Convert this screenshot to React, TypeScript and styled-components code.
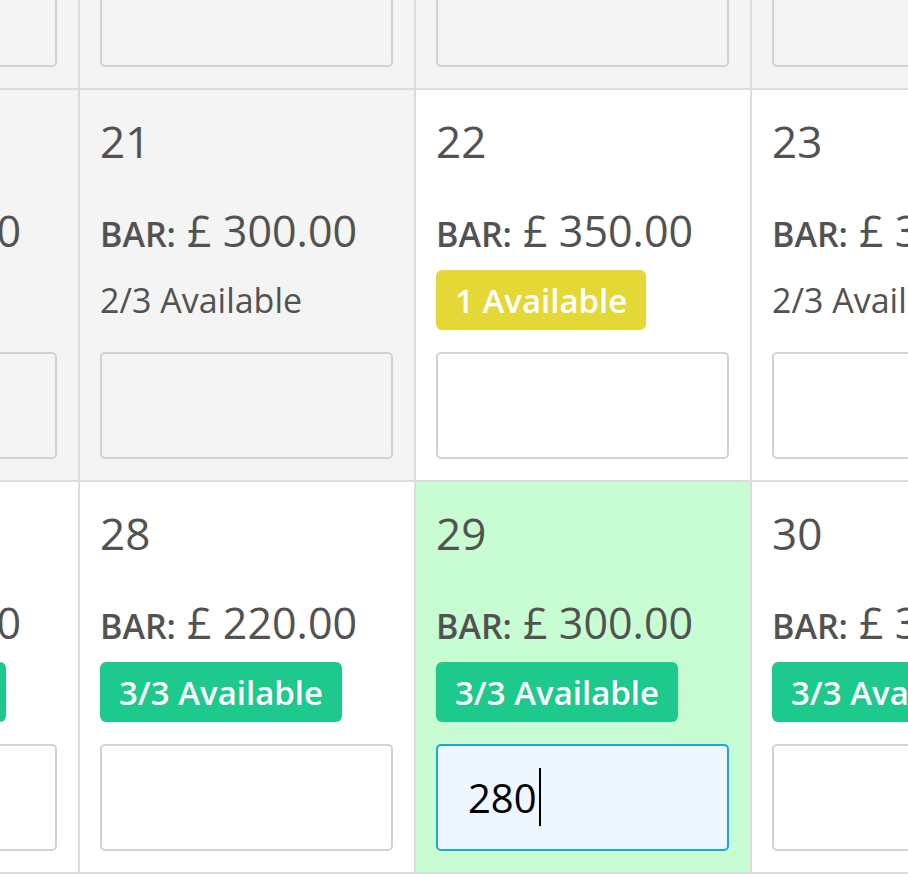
import React from "react";
import styled, { createGlobalStyle, css } from "styled-components";

const GlobalStyle = createGlobalStyle`
  html, body {
    margin: 0;
    padding: 0;
    background: #ffffff;
    overflow: hidden;
  }
  body {
    font-family: "Open Sans", "Noto Sans", "Liberation Sans", sans-serif;
    color: #525252;
  }
`;

type Tone = "past" | "open" | "selected";
type Stock = "plain" | "low" | "good";

interface Day {
  date: number;
  price: string;
  available: string;
  stock: Stock;
  tone: Tone;
  value?: string;
}

const weeks: Day[][] = [
  [
    { date: 13, price: "300.00", available: "2/3 Available", stock: "plain", tone: "past" },
    { date: 14, price: "300.00", available: "2/3 Available", stock: "plain", tone: "past" },
    { date: 15, price: "300.00", available: "2/3 Available", stock: "plain", tone: "past" },
    { date: 16, price: "300.00", available: "2/3 Available", stock: "plain", tone: "past" },
  ],
  [
    { date: 20, price: "300.00", available: "2/3 Available", stock: "plain", tone: "past" },
    { date: 21, price: "300.00", available: "2/3 Available", stock: "plain", tone: "past" },
    { date: 22, price: "350.00", available: "1 Available", stock: "low", tone: "open" },
    { date: 23, price: "300.00", available: "2/3 Available", stock: "plain", tone: "open" },
  ],
  [
    { date: 27, price: "220.00", available: "3/3 Available", stock: "good", tone: "open" },
    { date: 28, price: "220.00", available: "3/3 Available", stock: "good", tone: "open" },
    { date: 29, price: "300.00", available: "3/3 Available", stock: "good", tone: "selected", value: "280" },
    { date: 30, price: "300.00", available: "3/3 Available", stock: "good", tone: "open" },
  ],
];

const cellBackground: Record<Tone, string> = {
  past: "#f4f4f4",
  open: "#ffffff",
  selected: "#c8fdd3",
};

// the page is scrolled: only part of the month grid shows
const Viewport = styled.div`
  width: 908px;
  height: 874px;
  overflow: hidden;
`;

const MonthGrid = styled.div`
  display: grid;
  grid-template-columns: repeat(4, 336px);
  margin: -302px 0 0 -256px;
`;

const Cell = styled.div<{ $tone: Tone }>`
  box-sizing: border-box;
  height: 392px;
  padding: 21px 21px 21px 20px;
  display: flex;
  flex-direction: column;
  align-items: flex-start;
  border-right: 2px solid #dcdcdc;
  border-bottom: 2px solid #dcdcdc;
  background: ${(p) => cellBackground[p.$tone]};
`;

const DateNumber = styled.div`
  font-size: 44px;
  line-height: 60px;
`;

const Rate = styled.div`
  margin-top: 39px;
  font-size: 43px;
  line-height: 42px;
  white-space: nowrap;
`;

const RateLabel = styled.span`
  font-size: 34px;
  font-weight: 600;
`;

const Availability = styled.div<{ $stock: Stock }>`
  box-sizing: border-box;
  margin-top: 15px;
  height: 63px;
  display: inline-flex;
  align-items: center;
  font-size: 34px;
  white-space: nowrap;
  border-radius: 6px;
  ${(p) =>
    p.$stock === "plain"
      ? css`
          color: #525252;
        `
      : css`
          padding: 0 19px;
          color: #ffffff;
          font-weight: 600;
          font-size: 33px;
          background: ${p.$stock === "low" ? "#e3d836" : "#1dc98d"};
        `}
`;

const Field = styled.div`
  position: relative;
  width: 100%;
  margin-top: 22px;
`;

const RateInput = styled.input<{ $focused?: boolean }>`
  box-sizing: border-box;
  display: block;
  width: 100%;
  height: 107px;
  padding: 0 30px;
  border: 2px solid #d2d2d2;
  border-radius: 5px;
  background: transparent;
  font-family: "Open Sans", "Noto Sans", sans-serif;
  font-size: 40px;
  color: #000000;
  caret-color: transparent;
  outline: none;
  ${(p) =>
    p.$focused &&
    css`
      border-color: #1aa7dd;
      background: #eef6fe;
    `}
`;

const Caret = styled.span`
  position: absolute;
  left: 103px;
  top: 24px;
  width: 2px;
  height: 58px;
  background: #000000;
`;

function DayCell({ day }: { day: Day }) {
  const focused = day.value !== undefined;
  return (
    <Cell $tone={day.tone}>
      <DateNumber>{day.date}</DateNumber>
      <Rate>
        <RateLabel>BAR:</RateLabel> £ {day.price}
      </Rate>
      <Availability $stock={day.stock}>{day.available}</Availability>
      <Field>
        <RateInput $focused={focused} defaultValue={day.value} />
        {focused && <Caret />}
      </Field>
    </Cell>
  );
}

export default function App() {
  return (
    <>
      <GlobalStyle />
      <Viewport>
        <MonthGrid>
          {weeks.flat().map((day) => (
            <DayCell key={day.date} day={day} />
          ))}
        </MonthGrid>
      </Viewport>
    </>
  );
}
